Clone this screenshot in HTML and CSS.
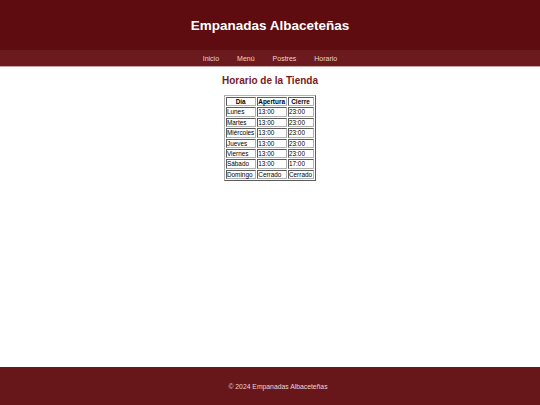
FILE: index.html
```html
<!DOCTYPE html>
<html lang="es">
<head>
<meta charset="utf-8">
<title>Empanadas Albaceteñas</title>
<link rel="stylesheet" href="styles.css">
</head>
<body>
<header class="site-header">
  <h1 class="site-title">Empanadas Albaceteñas</h1>
</header>
<nav class="site-nav">
  <a href="#">Inicio</a>
  <a href="#">Menú</a>
  <a href="#">Postres</a>
  <a href="#">Horario</a>
</nav>
<main class="content">
  <h2 class="section-title">Horario de la Tienda</h2>
  <table class="hours">
    <tr><th>Día</th><th>Apertura</th><th>Cierre</th></tr>
    <tr><td>Lunes</td><td>13:00</td><td>23:00</td></tr>
    <tr><td>Martes</td><td>13:00</td><td>23:00</td></tr>
    <tr><td>Miércoles</td><td>13:00</td><td>23:00</td></tr>
    <tr><td>Jueves</td><td>13:00</td><td>23:00</td></tr>
    <tr><td>Viernes</td><td>13:00</td><td>23:00</td></tr>
    <tr><td>Sábado</td><td>13:00</td><td>17:00</td></tr>
    <tr><td>Domingo</td><td>Cerrado</td><td>Cerrado</td></tr>
  </table>
</main>
<footer class="site-footer">
  <p>© 2024 Empanadas Albaceteñas</p>
</footer>
</body>
</html>
```
FILE: styles.css
```css
html, body {
  margin: 0;
  padding: 0;
  height: 100%;
}
body {
  font-family: "Liberation Sans", Arial, sans-serif;
  display: flex;
  flex-direction: column;
  background: #ffffff;
}
.site-header {
  background: #5e0c10;
  height: 50px;
  display: flex;
  align-items: center;
  justify-content: center;
}
.site-title {
  margin: 0;
  color: #ffffff;
  font-size: 13.5px;
  font-weight: bold;
}
.site-nav {
  background: #6b1a1e;
  height: 16px;
  display: flex;
  justify-content: center;
  align-items: center;
  gap: 18px;
  border-bottom: 1px solid #c9a5a7;
}
.site-nav a {
  color: #e9d6d7;
  font-size: 7px;
  text-decoration: none;
}
.content {
  flex: 1;
  display: flex;
  flex-direction: column;
  align-items: center;
}
.section-title {
  color: #7a1a1f;
  font-size: 10px;
  margin: 8px 0 9px;
}
.hours {
  border: 1px outset #b0b0b0;
  border-spacing: 1px;
  font-size: 6.4px;
  line-height: 7.4px;
  color: #000;
}
.hours th, .hours td {
  border: 1px inset #b0b0b0;
  padding: 0 1px 0 0;
  text-align: left;
}
.hours th {
  text-align: center;
  font-weight: bold;
}
.site-footer {
  background: #671719;
  height: 38px;
  display: flex;
  align-items: center;
  justify-content: center;
  padding-left: 16px;
}
.site-footer p {
  margin: 0;
  color: #e9d6d7;
  font-size: 6.8px;
}
```
